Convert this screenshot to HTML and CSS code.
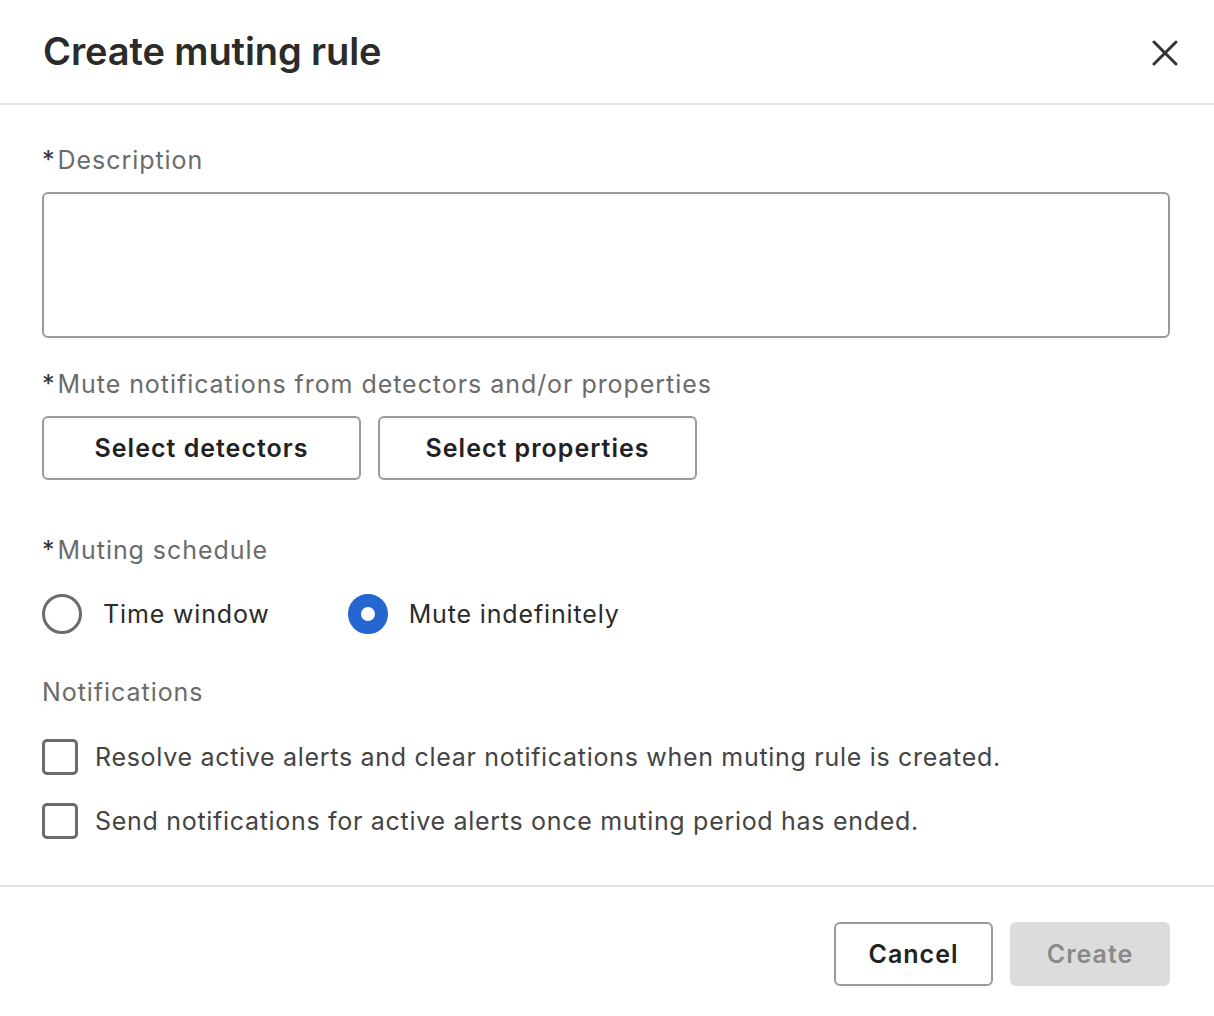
FILE: index.html
```html
<!DOCTYPE html>
<html>
<head>
<meta charset="utf-8">
<link rel="stylesheet" href="styles.css">
</head>
<body>
<div class="modal">
  <header class="header">
    <h1 class="title">Create muting rule</h1>
    <button class="close" aria-label="Close">
      <svg width="26" height="26" viewBox="0 0 26 26"><path d="M2 2 L24 24 M24 2 L2 24" stroke="#333" stroke-width="3" stroke-linecap="round"/></svg>
    </button>
  </header>
  <main class="body">
    <div class="field">
      <div class="label"><span class="req">*</span>Description</div>
      <div class="textarea"></div>
    </div>
    <div class="field">
      <div class="label"><span class="req">*</span>Mute notifications from detectors and/or properties</div>
      <div class="btnrow">
        <button class="btn">Select detectors</button>
        <button class="btn">Select properties</button>
      </div>
    </div>
    <div class="field schedule">
      <div class="label"><span class="req">*</span>Muting schedule</div>
      <div class="radios">
        <label class="radio"><span class="rcircle"></span>Time window</label>
        <label class="radio"><span class="rcircle on"></span>Mute indefinitely</label>
      </div>
    </div>
    <div class="field notif">
      <div class="label">Notifications</div>
      <label class="check"><span class="cbox"></span>Resolve active alerts and clear notifications when muting rule is created.</label>
      <label class="check"><span class="cbox"></span>Send notifications for active alerts once muting period has ended.</label>
    </div>
  </main>
  <footer class="footer">
    <button class="btn fbtn">Cancel</button>
    <button class="btn fbtn disabled">Create</button>
  </footer>
</div>
</body>
</html>
```
FILE: styles.css
```css
* { box-sizing: border-box; }
html, body { margin: 0; padding: 0; background: #fff; }
body { font-family: Inter, "Noto Sans", sans-serif; color: #2b2b2b; }
.modal { width: 1214px; height: 1016px; display: flex; flex-direction: column; }
.header { height: 105px; border-bottom: 2px solid #e4e4e4; display: flex; align-items: center; justify-content: space-between; padding: 0 34px 0 43px; }
.title { margin: 0; font-size: 38px; font-weight: 600; letter-spacing: -0.1px; color: #2b2b2b; padding-bottom: 2px; }
.close { background: none; border: 0; padding: 0; width: 30px; height: 30px; display: flex; align-items: center; justify-content: center; margin-top: 3px; }
.body { padding: 40px 44px 0 42px; flex: 0 0 auto; height: 780px; }
.label { font-size: 25px; color: #6b6b6b; line-height: 30px; letter-spacing: 0.95px; }
.req { color: #333; margin-right: 2px; }
.textarea { margin-top: 17px; height: 146px; border: 2px solid #9a9a9a; border-radius: 6px; }
.field + .field { margin-top: 31px; }
.btnrow { display: flex; gap: 17px; margin-top: 17px; }
.btn { font-family: inherit; font-size: 25px; letter-spacing: 1px; font-weight: 600; color: #222; background: #fff; border: 2px solid #9a9a9a; border-radius: 6px; width: 319px; height: 64px; padding: 0; }
.schedule { margin-top: 55px !important; }
.radios { display: flex; gap: 78px; margin-top: 29px; }
.radio { display: flex; align-items: center; gap: 21px; font-size: 25px; letter-spacing: 0.85px; color: #2b2b2b; }
.rcircle { width: 40px; height: 40px; border: 3px solid #6b6b6b; border-radius: 50%; }
.rcircle.on { border: 13px solid #2566d0; background: #fff; }
.notif { margin-top: 43px !important; }
.check { display: flex; align-items: center; gap: 17px; font-size: 25px; letter-spacing: 0.7px; color: #444; margin-top: 32px; }
.check + .check { margin-top: 28px; }
.cbox { width: 36px; height: 36px; border: 3px solid #6b6b6b; border-radius: 5px; flex: 0 0 auto; }
.footer { border-top: 2px solid #e4e4e4; flex: 1; display: flex; justify-content: flex-end; align-items: flex-start; padding: 35px 44px 0 0; gap: 17px; }
.fbtn { width: 159px; }
.disabled { background: #dcdcdc; border-color: #dcdcdc; color: #8a8a8a; width: 160px; }
```
